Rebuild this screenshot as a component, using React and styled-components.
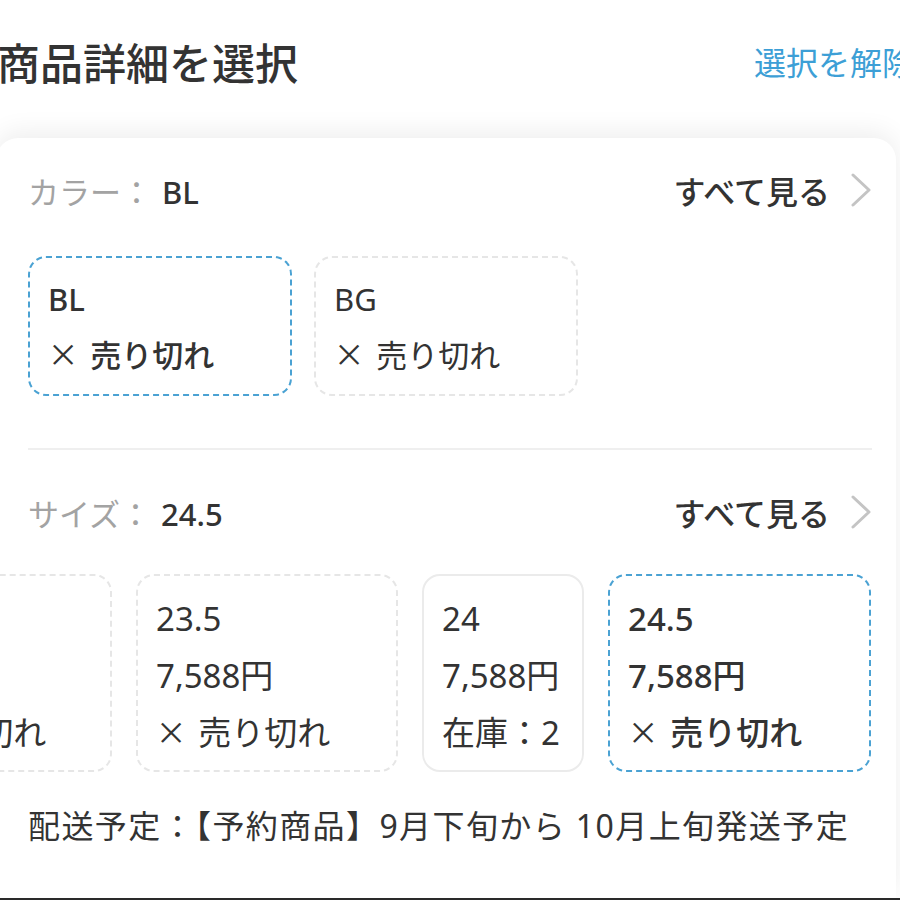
import React from 'react'
import styled, { createGlobalStyle } from 'styled-components'

const GlobalStyle = createGlobalStyle`
  html, body {
    margin: 0;
    padding: 0;
    background: #ffffff;
  }
  body {
    font-family: "Noto Sans", "Noto Sans CJK JP", sans-serif;
    color: #333333;
  }
`

const colors = [
  { name: 'BL', selected: true },
  { name: 'BG', selected: false },
]

const sizes = [
  { name: '23', price: '7,588円', stock: null, width: 260, variant: 'dashed' },
  { name: '23.5', price: '7,588円', stock: null, width: 262, variant: 'dashed' },
  { name: '24', price: '7,588円', stock: 2, width: 162, variant: 'solid' },
  { name: '24.5', price: '7,588円', stock: null, width: 263, variant: 'selected' },
]

function Chevron() {
  return (
    <svg width="22" height="34" viewBox="0 0 22 34" fill="none">
      <path d="M3 2 L19 17 L3 32" stroke="#c4c4c4" strokeWidth="3" strokeLinecap="round" strokeLinejoin="round" />
    </svg>
  )
}

function SoldOut({ bold }) {
  return (
    <ChipLine $bold={bold}>
      <Cross>×</Cross>売り切れ
    </ChipLine>
  )
}

function App() {
  return (
    <Page>
      <GlobalStyle />
      <TopBar>
        <Title>商品詳細を選択</Title>
        <ClearLink>選択を解除</ClearLink>
      </TopBar>

      <Card>
        <OptionHeader>
          <Label>
            カラー：<Value>BL</Value>
          </Label>
          <SeeAll>
            すべて見る
            <Chevron />
          </SeeAll>
        </OptionHeader>
        <ChipRow>
          {colors.map((c) => (
            <ColorChip key={c.name} $selected={c.selected}>
              <ChipLine $bold={c.selected}>{c.name}</ChipLine>
              <SoldOut bold={c.selected} />
            </ColorChip>
          ))}
        </ChipRow>

        <Divider />

        <OptionHeader>
          <Label>
            サイズ：<Value>24.5</Value>
          </Label>
          <SeeAll>
            すべて見る
            <Chevron />
          </SeeAll>
        </OptionHeader>
        <Scroller>
          <SizeTrack>
            {sizes.map((s) => (
              <SizeChip key={s.name} $variant={s.variant} style={{ width: s.width }}>
                <ChipLine $bold={s.variant === 'selected'}>{s.name}</ChipLine>
                <ChipLine $bold={s.variant === 'selected'}>{s.price}</ChipLine>
                {s.stock ? (
                  <ChipLine>在庫：{s.stock}</ChipLine>
                ) : (
                  <SoldOut bold={s.variant === 'selected'} />
                )}
              </SizeChip>
            ))}
          </SizeTrack>
        </Scroller>

        <Shipping>配送予定：【予約商品】9月下旬から 10月上旬発送予定</Shipping>
      </Card>
      <BottomEdge />
    </Page>
  )
}

const Page = styled.div`
  width: 900px;
  height: 900px;
  overflow: hidden;
  display: flex;
  flex-direction: column;
  background: #ffffff;
`

const TopBar = styled.div`
  height: 138px;
  flex-shrink: 0;
  display: flex;
  align-items: center;
  justify-content: space-between;
  padding-bottom: 16px;
  box-sizing: border-box;
  white-space: nowrap;
`

const Title = styled.h1`
  margin: 0 0 0 -3px;
  font-size: 43px;
  font-weight: 500;
  color: #333333;
`

const ClearLink = styled.span`
  font-size: 32px;
  color: #3d9fd6;
  margin-right: -14px;
`

const Card = styled.div`
  flex: 1;
  margin: 0 4px 0 -4px;
  padding: 20px 24px 0 32px;
  background: #ffffff;
  border-radius: 22px 22px 0 0;
  box-shadow: 0 -6px 26px rgba(0, 0, 0, 0.07);
  overflow: hidden;
`

const OptionHeader = styled.div`
  height: 64px;
  display: flex;
  align-items: center;
  justify-content: space-between;
`

const Label = styled.div`
  font-size: 31px;
  color: #a3a3a3;
  white-space: nowrap;
`

const Value = styled.span`
  margin-left: 10px;
  color: #333333;
  font-weight: 500;
`

const SeeAll = styled.div`
  display: flex;
  align-items: center;
  gap: 20px;
  font-size: 32px;
  font-weight: 500;
  color: #333333;
`

const ChipRow = styled.div`
  display: flex;
  gap: 22px;
  margin-top: 34px;
`

const ColorChip = styled.div`
  width: 264px;
  height: 140px;
  box-sizing: border-box;
  padding: 13px 18px;
  border-radius: 18px;
  border: 2.5px dashed ${(p) => (p.$selected ? '#4aa2d3' : '#e6e6e6')};
`

const ChipLine = styled.div`
  height: 56px;
  line-height: 56px;
  font-size: 31px;
  font-weight: ${(p) => (p.$bold ? 500 : 400)};
  color: #333333;
  white-space: nowrap;
`

const Cross = styled.span`
  display: inline-block;
  font-size: 46px;
  font-weight: 300;
  line-height: 1;
  vertical-align: -4px;
  margin: 0 14px 0 2px;
`

const Divider = styled.div`
  height: 2px;
  background: #efefef;
  margin: 52px 0 30px;
`

const Scroller = styled.div`
  margin: 30px -24px 0 -32px;
  padding-left: 32px;
  overflow: hidden;
`

const SizeTrack = styled.div`
  display: flex;
  gap: 24px;
  margin-left: -176px;
`

const SizeChip = styled.div`
  flex-shrink: 0;
  height: 198px;
  box-sizing: border-box;
  padding: 14px 18px;
  border-radius: 18px;
  border: ${(p) => (p.$variant === 'solid' ? '2px solid #ebebeb' : p.$variant === 'selected' ? '2.5px dashed #4aa2d3' : '2.5px dashed #e6e6e6')};

  & > div {
    height: 57px;
    line-height: 57px;
    font-size: 33px;
  }
`

const Shipping = styled.div`
  margin-top: 26px;
  font-size: 32px;
  letter-spacing: 1.4px;
  line-height: 56px;
  color: #333333;
  white-space: nowrap;
`

const BottomEdge = styled.div`
  height: 2px;
  flex-shrink: 0;
  background: #2a2a2a;
`

export default App
